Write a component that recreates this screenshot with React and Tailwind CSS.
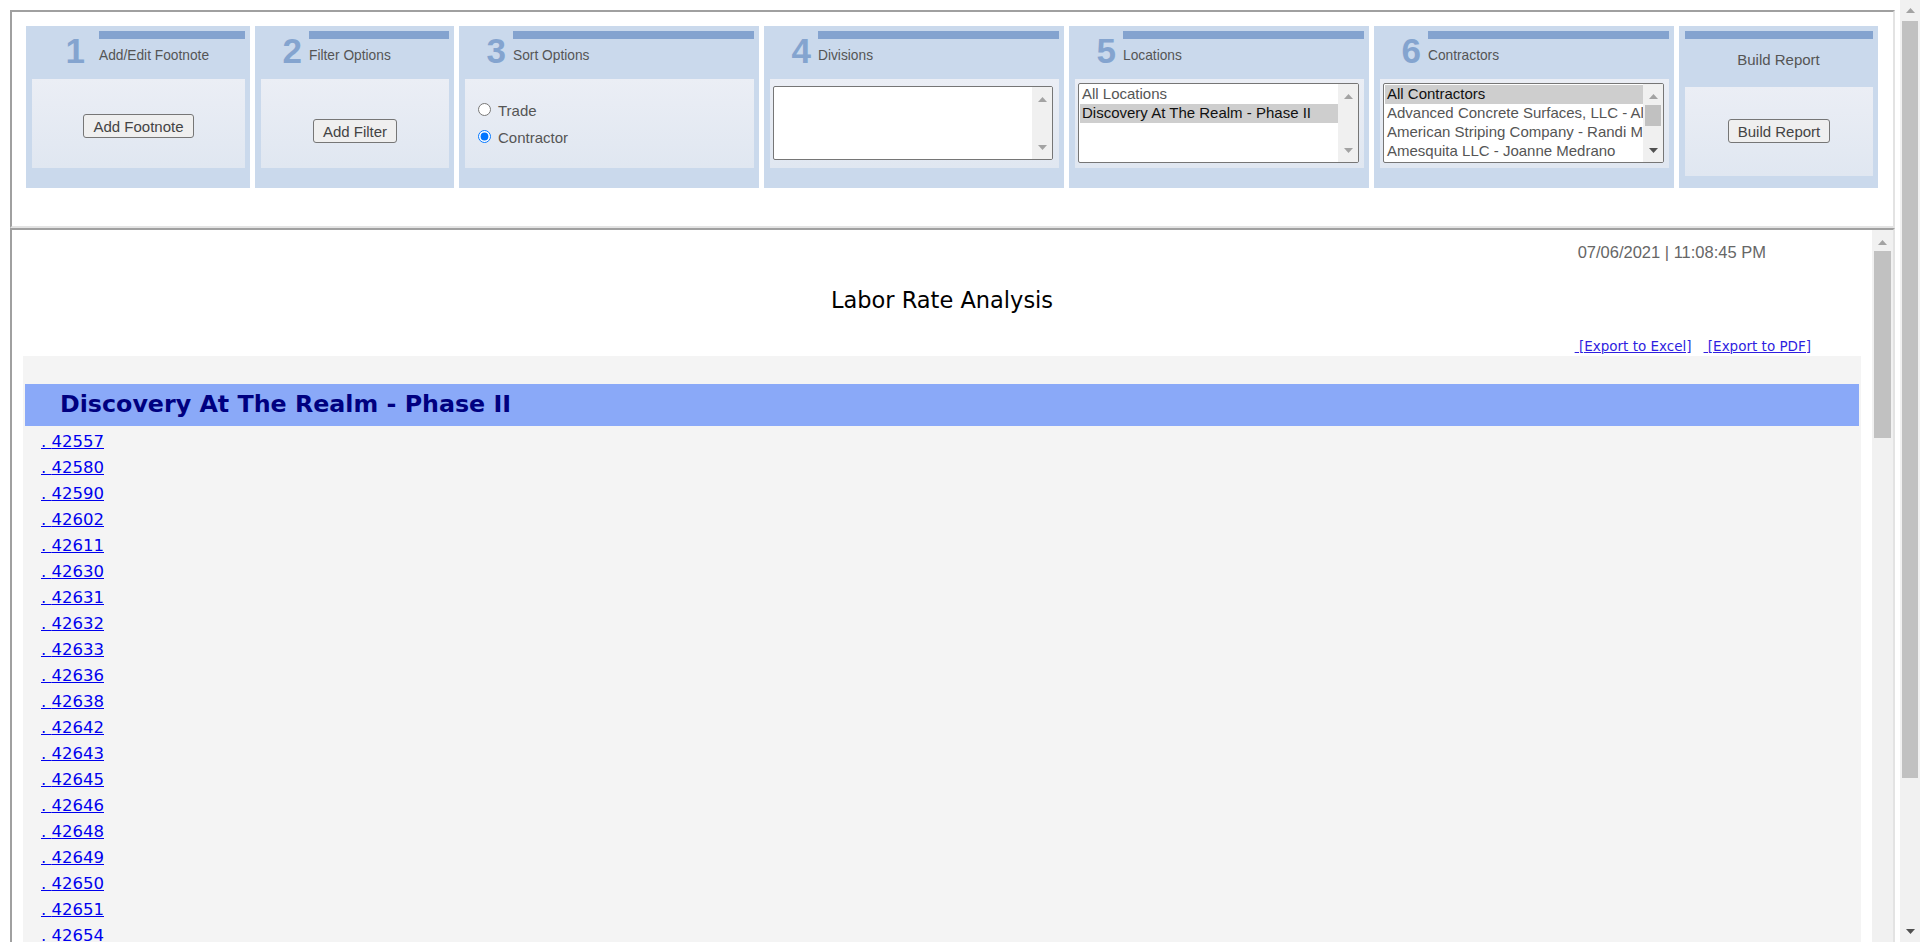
import React from "react";

const ARIAL = "font-['Liberation_Sans',Arial,sans-serif]";
const VERD = "font-['DejaVu_Sans',Verdana,sans-serif]";

function Arrow({ dir = "up", enabled = false }) {
  const color = enabled ? "#505050" : "#a3a3a3";
  return (
    <svg width="9" height="5" viewBox="0 0 9 5" className="block">
      {dir === "up" ? (
        <polygon points="0,5 4.5,0 9,5" fill={color} />
      ) : (
        <polygon points="0,0 9,0 4.5,5" fill={color} />
      )}
    </svg>
  );
}

function ListScroll({ thumb = false, downEnabled = false }) {
  return (
    <div className="w-[20px] shrink-0 bg-[#f0f0f0] flex flex-col">
      <div className="h-[21px] flex justify-center pt-[10px]">
        <Arrow dir="up" />
      </div>
      {thumb && <div className="h-[21px] mx-[2px] bg-[#c1c1c1]" />}
      <div className="flex-1" />
      <div className="h-[21px] flex justify-center pt-[7px]">
        <Arrow dir="down" enabled={downEnabled} />
      </div>
    </div>
  );
}

function ListBox({ cls, options, selected, thumb, downEnabled }) {
  return (
    <div
      className={`${cls} border border-[#767676] rounded-[2px] bg-white flex overflow-hidden ${ARIAL}`}
    >
      <div className="flex-1 min-w-0 pt-[1px] pl-[1px] overflow-hidden">
        {options.map((o) => (
          <div
            key={o}
            className={
              o === selected
                ? "h-[19px] leading-[17px] pl-[2px] whitespace-nowrap overflow-hidden text-[15px] bg-[#cecece] text-[#111]"
                : "h-[19px] leading-[17px] pl-[2px] whitespace-nowrap overflow-hidden text-[15px] text-[#555]"
            }
          >
            {o}
          </div>
        ))}
      </div>
      <ListScroll thumb={thumb} downEnabled={downEnabled} />
    </div>
  );
}

function Btn({ children }) {
  return (
    <button
      className={`h-[24px] px-[9px] border border-[#767676] rounded-[3px] bg-[#efefef] text-[15px] leading-none text-[#444] ${ARIAL}`}
    >
      {children}
    </button>
  );
}

function Panel({ wCls, numCls, n, title, children }) {
  return (
    <div className={`${wCls} h-[162px] shrink-0 bg-[#cad9ec] pt-[5px] ${ARIAL}`}>
      <div className="flex h-[48px]">
        <div
          className={`${numCls} shrink-0 text-right text-[35px] leading-[35px] font-bold text-[#84a4cf] mt-[2px]`}
        >
          {n}
        </div>
        <div className="flex-1 mr-[5px]">
          <div className="h-[8px] bg-[#84a3cf]" />
          <div className="mt-[7px] text-[13.75px] leading-[20px] text-[#555]">{title}</div>
        </div>
      </div>
      <div className="ml-[6px] mr-[5px] h-[89px] bg-linear-to-b from-[#ebeef5] to-[#e0e7f1]">
        {children}
      </div>
    </div>
  );
}

const rows = [
  "42557", "42580", "42590", "42602", "42611", "42630", "42631", "42632",
  "42633", "42636", "42638", "42642", "42643", "42645", "42646", "42648",
  "42649", "42650", "42651", "42654", "42655", "42657",
];

export default function App() {
  return (
    <div className="w-full h-[942px] overflow-hidden bg-white flex">
      <div className="flex-1 min-w-0 pt-[10px] pl-[10px]">
        {/* Top frame */}
        <div className="w-[1885px] h-[218px] border-2 border-t-[#a0a0a0] border-l-[#a0a0a0] border-b-[#e3e3e3] border-r-[#e3e3e3] pt-[14px] pl-[14px]">
          <div className="flex gap-[5px]">
            <Panel wCls="w-[224px]" numCls="w-[73px] pr-[14px]" n="1" title="Add/Edit Footnote">
              <div className="flex justify-center pt-[35px]">
                <Btn>Add Footnote</Btn>
              </div>
            </Panel>
            <Panel wCls="w-[199px]" numCls="w-[54px] pr-[7px]" n="2" title="Filter Options">
              <div className="flex justify-center pt-[40px]">
                <Btn>Add Filter</Btn>
              </div>
            </Panel>
            <Panel wCls="w-[300px]" numCls="w-[54px] pr-[7px]" n="3" title="Sort Options">
              <div className="pt-[17px] pl-[13px] text-[15px] text-[#555]">
                <label className="flex items-center h-[27px]">
                  <input type="radio" name="sort" className="w-[13px] h-[13px] m-0 mr-[7px]" />
                  <span className="relative top-[2px]">Trade</span>
                </label>
                <label className="flex items-center h-[27px]">
                  <input
                    type="radio"
                    name="sort"
                    defaultChecked
                    className="w-[13px] h-[13px] m-0 mr-[7px]"
                  />
                  <span className="relative top-[2px]">Contractor</span>
                </label>
              </div>
            </Panel>
            <Panel wCls="w-[300px]" numCls="w-[54px] pr-[7px]" n="4" title="Divisions">
              <div className="pt-[7px] pl-[3px]">
                <ListBox cls="w-[280px] h-[74px]" options={[]} />
              </div>
            </Panel>
            <Panel wCls="w-[300px]" numCls="w-[54px] pr-[7px]" n="5" title="Locations">
              <div className="pt-[4px] pl-[3px]">
                <ListBox
                  cls="w-[281px] h-[80px]"
                  options={["All Locations", "Discovery At The Realm - Phase II"]}
                  selected="Discovery At The Realm - Phase II"
                />
              </div>
            </Panel>
            <Panel wCls="w-[300px]" numCls="w-[54px] pr-[7px]" n="6" title="Contractors">
              <div className="pt-[4px] pl-[3px]">
                <ListBox
                  cls="w-[281px] h-[80px]"
                  options={[
                    "All Contractors",
                    "Advanced Concrete Surfaces, LLC - Alex Ortiz",
                    "American Striping Company - Randi Marks",
                    "Amesquita LLC - Joanne Medrano",
                  ]}
                  selected="All Contractors"
                  thumb
                  downEnabled
                />
              </div>
            </Panel>
            {/* Build report */}
            <div className={`w-[199px] h-[162px] shrink-0 bg-[#cad9ec] pt-[5px] ${ARIAL}`}>
              <div className="ml-[6px] mr-[5px] h-[8px] bg-[#84a3cf]" />
              <div className="mt-[11px] h-[20px] leading-[20px] text-center text-[15px] text-[#555]">
                Build Report
              </div>
              <div className="mt-[17px] ml-[6px] mr-[5px] h-[89px] bg-linear-to-b from-[#ebeef5] to-[#e0e7f1] flex justify-center pt-[32px]">
                <div>
                  <Btn>Build Report</Btn>
                </div>
              </div>
            </div>
          </div>
        </div>

        {/* Report frame */}
        <div className="w-[1885px] h-[800px] border-2 border-b-0 border-t-[#a0a0a0] border-l-[#a0a0a0] border-r-[#e3e3e3] flex">
          <div className="flex-1 min-w-0">
            <div className={`flex justify-end pr-[106px] pt-[13px] h-[32px] text-[16.5px] leading-[19px] text-[#666] ${ARIAL}`}>
              07/06/2021 | 11:08:45 PM
            </div>
            <div className={`mt-[24px] h-[28px] leading-[28px] text-center text-[22.5px] text-black ${VERD}`}>
              Labor Rate Analysis
            </div>
            <div className={`mt-[24px] h-[16px] flex justify-end gap-[12px] pr-[61px] text-[13.5px] leading-[16px] ${VERD}`}>
              <a href="#" className="underline text-[#2f1ee0]">{"\u00a0[Export to Excel]"}</a>
              <a href="#" className="underline text-[#2f1ee0]">{"\u00a0[Export to PDF]"}</a>
            </div>
            <div className="mt-[2px] mx-[11px] h-[700px] bg-[#f4f4f4] pt-[28px]">
              <div className="mx-[2px] h-[42px] bg-[#8aa9f8] flex items-center pl-[35px]">
                <span className={`text-[23.75px] font-bold text-[#000080] ${VERD}`}>
                  Discovery At The Realm - Phase II
                </span>
              </div>
              <div className={`pt-[3px] pl-[18px] ${VERD}`}>
                {rows.map((r) => (
                  <div key={r} className="h-[26px] leading-[26px] text-[16.5px]">
                    <a href="#" className="underline text-[#0000ee]">
                      . {r}
                    </a>
                  </div>
                ))}
              </div>
            </div>
          </div>
          {/* inner scrollbar */}
          <div className="w-[21px] shrink-0 bg-[#f1f1f1] flex flex-col">
            <div className="h-[21px] flex justify-center pt-[10px]">
              <Arrow dir="up" />
            </div>
            <div className="h-[187px] mx-[2px] bg-[#c1c1c1]" />
          </div>
        </div>
      </div>

      {/* page scrollbar */}
      <div className="w-[20px] shrink-0 h-full bg-[#f1f1f1] flex flex-col">
        <div className="h-[21px] flex justify-center items-center">
          <Arrow dir="up" />
        </div>
        <div className="h-[757px] mx-[2px] bg-[#c1c1c1]" />
        <div className="flex-1" />
        <div className="h-[21px] flex justify-center items-center">
          <Arrow dir="down" enabled />
        </div>
      </div>
    </div>
  );
}
